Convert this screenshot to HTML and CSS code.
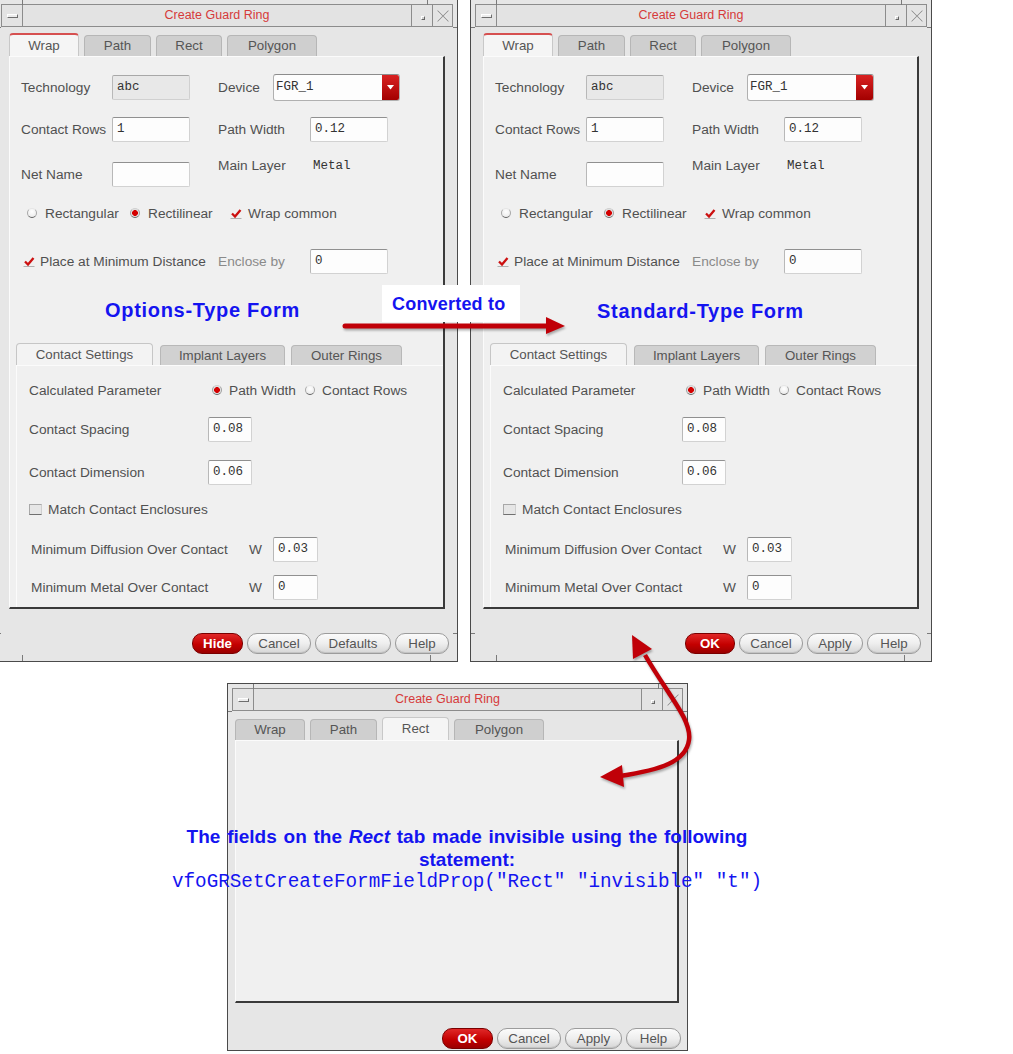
FILE: index.html
```html
<!DOCTYPE html>
<html>
<head>
<meta charset="utf-8">
<title>Create Guard Ring</title>
<link rel="stylesheet" href="styles.css">
</head>
<body>
<div class="canvas">

  <!-- Left window: options-type form -->
  <div class="win win-a">
    <span class="hdl hdl-t1"></span><span class="hdl hdl-t2"></span>
    <span class="hdl hdl-b1"></span><span class="hdl hdl-b2"></span>
    <span class="hdl hdl-l1"></span><span class="hdl hdl-l2"></span>
    <span class="hdl hdl-r1"></span><span class="hdl hdl-r2"></span>
    <div class="titlebar">
      <div class="tb-btn tb-min"><span class="min-glyph"></span></div>
      <div class="tb-title">Create Guard Ring</div>
      <div class="tb-btn tb-max"><span class="max-glyph"></span></div>
      <div class="tb-btn tb-close"><svg width="14" height="14" viewBox="0 0 14 14"><path d="M1.5 1.5 L12.5 12.5 M12.5 1.5 L1.5 12.5" stroke="#fff" stroke-width="2.4"/><path d="M1.5 1.5 L12.5 12.5 M12.5 1.5 L1.5 12.5" stroke="#9a9a9a" stroke-width="1.1"/></svg></div>
    </div>
    <div class="tabs">
      <div class="tab tab-sel tab-red t-wrap">Wrap</div>
      <div class="tab t-path">Path</div>
      <div class="tab t-rect">Rect</div>
      <div class="tab t-poly">Polygon</div>
    </div>
    <div class="panel">
      <div class="row r1">
        <span class="lbl c1">Technology</span>
        <span class="fld fld-dis">abc</span>
        <span class="lbl c2a">Device</span>
        <span class="combo"><span class="combo-text">FGR_1</span><span class="combo-btn"><svg width="7" height="5" viewBox="0 0 7 5"><path d="M0 0 H7 L3.5 4.5 Z" fill="#fff"/></svg></span></span>
      </div>
      <div class="row r2">
        <span class="lbl c1">Contact Rows</span>
        <span class="fld">1</span>
        <span class="lbl c2">Path Width</span>
        <span class="fld">0.12</span>
      </div>
      <div class="row r3">
        <span class="lbl c1">Net Name</span>
        <span class="fld"></span>
        <span class="lbl c2 hi">Main Layer</span>
        <span class="mono hi">Metal</span>
      </div>
      <div class="row r4">
        <span class="opt o1"><span class="radio"></span>Rectangular</span>
        <span class="opt o2"><span class="radio on"></span>Rectilinear</span>
        <span class="opt o3"><svg class="check" width="12" height="11" viewBox="0 0 12 11"><path d="M0.5 10.5 H11.5" stroke="#b0b0b0" stroke-width="1"/><path d="M2 5.5 L5 8.5 L10.5 2" stroke="#cc1010" stroke-width="2.3" fill="none"/></svg>Wrap common</span>
      </div>
      <div class="row r5">
        <span class="opt o4"><svg class="check" width="12" height="11" viewBox="0 0 12 11"><path d="M0.5 10.5 H11.5" stroke="#b0b0b0" stroke-width="1"/><path d="M2 5.5 L5 8.5 L10.5 2" stroke="#cc1010" stroke-width="2.3" fill="none"/></svg>Place at Minimum Distance</span>
        <span class="lbl c2e dis">Enclose by</span>
        <span class="fld">0</span>
      </div>
      <div class="subtabs">
        <div class="stab stab-sel s1">Contact Settings</div>
        <div class="stab s2">Implant Layers</div>
        <div class="stab s3">Outer Rings</div>
      </div>
      <div class="subpanel">
        <div class="row q1">
          <span class="lbl d1">Calculated Parameter</span>
          <span class="opt p1"><span class="radio on"></span>Path Width</span>
          <span class="opt p2"><span class="radio"></span>Contact Rows</span>
        </div>
        <div class="row q2">
          <span class="lbl d2">Contact Spacing</span>
          <span class="fld fld-s">0.08</span>
        </div>
        <div class="row q3">
          <span class="lbl d2">Contact Dimension</span>
          <span class="fld fld-s">0.06</span>
        </div>
        <div class="row q4">
          <span class="opt"><span class="box"></span>Match Contact Enclosures</span>
        </div>
        <div class="row q5">
          <span class="lbl d3">Minimum Diffusion Over Contact</span>
          <span class="lbl wl">W</span>
          <span class="fld fld-s">0.03</span>
        </div>
        <div class="row q6">
          <span class="lbl d3">Minimum Metal Over Contact</span>
          <span class="lbl wl">W</span>
          <span class="fld fld-s">0</span>
        </div>
      </div>
    </div>
    <div class="btnrow">
      <span class="btn btn-red bw51">Hide</span>
      <span class="btn bw64">Cancel</span>
      <span class="btn bw76">Defaults</span>
      <span class="btn bw54">Help</span>
    </div>
  </div>

  <!-- Right window: standard-type form -->
  <div class="win win-b">
    <span class="hdl hdl-t1"></span><span class="hdl hdl-t2"></span>
    <span class="hdl hdl-b1"></span><span class="hdl hdl-b2"></span>
    <span class="hdl hdl-l1"></span><span class="hdl hdl-l2"></span>
    <span class="hdl hdl-r1"></span><span class="hdl hdl-r2"></span>
    <div class="titlebar">
      <div class="tb-btn tb-min"><span class="min-glyph"></span></div>
      <div class="tb-title">Create Guard Ring</div>
      <div class="tb-btn tb-max"><span class="max-glyph"></span></div>
      <div class="tb-btn tb-close"><svg width="14" height="14" viewBox="0 0 14 14"><path d="M1.5 1.5 L12.5 12.5 M12.5 1.5 L1.5 12.5" stroke="#fff" stroke-width="2.4"/><path d="M1.5 1.5 L12.5 12.5 M12.5 1.5 L1.5 12.5" stroke="#9a9a9a" stroke-width="1.1"/></svg></div>
    </div>
    <div class="tabs">
      <div class="tab tab-sel tab-red t-wrap">Wrap</div>
      <div class="tab t-path">Path</div>
      <div class="tab t-rect">Rect</div>
      <div class="tab t-poly">Polygon</div>
    </div>
    <div class="panel">
      <div class="row r1">
        <span class="lbl c1">Technology</span>
        <span class="fld fld-dis">abc</span>
        <span class="lbl c2a">Device</span>
        <span class="combo"><span class="combo-text">FGR_1</span><span class="combo-btn"><svg width="7" height="5" viewBox="0 0 7 5"><path d="M0 0 H7 L3.5 4.5 Z" fill="#fff"/></svg></span></span>
      </div>
      <div class="row r2">
        <span class="lbl c1">Contact Rows</span>
        <span class="fld">1</span>
        <span class="lbl c2">Path Width</span>
        <span class="fld">0.12</span>
      </div>
      <div class="row r3">
        <span class="lbl c1">Net Name</span>
        <span class="fld"></span>
        <span class="lbl c2 hi">Main Layer</span>
        <span class="mono hi">Metal</span>
      </div>
      <div class="row r4">
        <span class="opt o1"><span class="radio"></span>Rectangular</span>
        <span class="opt o2"><span class="radio on"></span>Rectilinear</span>
        <span class="opt o3"><svg class="check" width="12" height="11" viewBox="0 0 12 11"><path d="M0.5 10.5 H11.5" stroke="#b0b0b0" stroke-width="1"/><path d="M2 5.5 L5 8.5 L10.5 2" stroke="#cc1010" stroke-width="2.3" fill="none"/></svg>Wrap common</span>
      </div>
      <div class="row r5">
        <span class="opt o4"><svg class="check" width="12" height="11" viewBox="0 0 12 11"><path d="M0.5 10.5 H11.5" stroke="#b0b0b0" stroke-width="1"/><path d="M2 5.5 L5 8.5 L10.5 2" stroke="#cc1010" stroke-width="2.3" fill="none"/></svg>Place at Minimum Distance</span>
        <span class="lbl c2e dis">Enclose by</span>
        <span class="fld">0</span>
      </div>
      <div class="subtabs">
        <div class="stab stab-sel s1">Contact Settings</div>
        <div class="stab s2">Implant Layers</div>
        <div class="stab s3">Outer Rings</div>
      </div>
      <div class="subpanel">
        <div class="row q1">
          <span class="lbl d1">Calculated Parameter</span>
          <span class="opt p1"><span class="radio on"></span>Path Width</span>
          <span class="opt p2"><span class="radio"></span>Contact Rows</span>
        </div>
        <div class="row q2">
          <span class="lbl d2">Contact Spacing</span>
          <span class="fld fld-s">0.08</span>
        </div>
        <div class="row q3">
          <span class="lbl d2">Contact Dimension</span>
          <span class="fld fld-s">0.06</span>
        </div>
        <div class="row q4">
          <span class="opt"><span class="box"></span>Match Contact Enclosures</span>
        </div>
        <div class="row q5">
          <span class="lbl d3">Minimum Diffusion Over Contact</span>
          <span class="lbl wl">W</span>
          <span class="fld fld-s">0.03</span>
        </div>
        <div class="row q6">
          <span class="lbl d3">Minimum Metal Over Contact</span>
          <span class="lbl wl">W</span>
          <span class="fld fld-s">0</span>
        </div>
      </div>
    </div>
    <div class="btnrow">
      <span class="btn btn-red bw50">OK</span>
      <span class="btn bw64">Cancel</span>
      <span class="btn bw56">Apply</span>
      <span class="btn bw54">Help</span>
    </div>
  </div>

  <!-- Bottom window: Rect tab with invisible fields -->
  <div class="win win-c">
    <span class="hdl hdl-t1"></span><span class="hdl hdl-t2"></span>
    <span class="hdl hdl-l1"></span><span class="hdl hdl-r1"></span>
    <div class="titlebar">
      <div class="tb-btn tb-min"><span class="min-glyph"></span></div>
      <div class="tb-title">Create Guard Ring</div>
      <div class="tb-btn tb-max"><span class="max-glyph"></span></div>
      <div class="tb-btn tb-close"><svg width="14" height="14" viewBox="0 0 14 14"><path d="M1.5 1.5 L12.5 12.5 M12.5 1.5 L1.5 12.5" stroke="#fff" stroke-width="2.4"/><path d="M1.5 1.5 L12.5 12.5 M12.5 1.5 L1.5 12.5" stroke="#9a9a9a" stroke-width="1.1"/></svg></div>
    </div>
    <div class="tabs">
      <div class="tab t-wrap">Wrap</div>
      <div class="tab t-path">Path</div>
      <div class="tab tab-sel t-rect2">Rect</div>
      <div class="tab t-poly">Polygon</div>
    </div>
    <div class="panel"></div>
    <div class="btnrow">
      <span class="btn btn-red bw51">OK</span>
      <span class="btn bw64">Cancel</span>
      <span class="btn bw57">Apply</span>
      <span class="btn bw55">Help</span>
    </div>
  </div>

  <!-- Annotations -->
  <div class="note note-opt">Options-Type Form</div>
  <div class="note note-std">Standard-Type Form</div>
  <div class="conv">Converted to</div>

  <svg class="arrows" width="1013" height="1054" viewBox="0 0 1013 1054">
    <path d="M345 326 L550 326" stroke="#c00008" stroke-width="5" stroke-linecap="round" fill="none"/>
    <path d="M546 317 L565 326 L546 334 Z" fill="#c00008"/>
    <path d="M645 655 C668 695 692 720 689 740 C686 762 660 770 620 776" stroke="#c00008" stroke-width="4.5" fill="none"/>
    <path d="M632 635 L633 659 L652 649 Z" fill="#c00008"/>
    <path d="M600 777 L622 765 L624 787 Z" fill="#c00008"/>
  </svg>

  <div class="caption">
    <div class="cap-line">The fields on the <i>Rect</i> tab made invisible using the following</div>
    <div class="cap-line">statement:</div>
    <div class="cap-code">vfoGRSetCreateFormFieldProp("Rect" "invisible" "t")</div>
  </div>

</div>
</body>
</html>
```

FILE: styles.css
```css
* { box-sizing: border-box; }
html, body { margin: 0; padding: 0; background: #ffffff; }
body {
  width: 1013px;
  height: 1054px;
  overflow: hidden;
  font-family: "Liberation Sans", Arial, sans-serif;
}
.canvas { position: relative; width: 1013px; height: 1054px; overflow: hidden; background: #fff; }

/* ---------- windows ---------- */
.win {
  position: absolute;
  display: flex;
  flex-direction: column;
  border: 1px solid #4a4a4a;
  background: #e6e6e6;
  padding: 4px 4px 3px 4px;
}
.win-a { left: -4px; top: -1px; width: 462px; height: 663px; }
.win-b { left: 470px; top: -1px; width: 462px; height: 663px; }
.win-c { left: 227px; top: 683px; width: 461px; height: 368px; }

/* frame resize handles */
.hdl { position: absolute; background: #7a7a7a; }
.hdl-t1 { left: 25px; top: 0; width: 1px; height: 5px; }
.hdl-t2 { left: 430px; top: 0; width: 1px; height: 5px; }
.hdl-b1 { left: 25px; bottom: 0; width: 1px; height: 6px; }
.hdl-b2 { left: 433px; bottom: 0; width: 1px; height: 6px; }
.hdl-l1 { left: 0; top: 27px; width: 4px; height: 1px; }
.hdl-l2 { left: 0; bottom: 27px; width: 4px; height: 1px; }
.hdl-r1 { right: 0; top: 27px; width: 4px; height: 1px; }
.hdl-r2 { right: 0; bottom: 27px; width: 4px; height: 1px; }

/* ---------- title bar ---------- */
.titlebar {
  display: flex;
  height: 23px;
  flex: none;
  border: 1px solid #8c8c8c;
  background: #e3e3e3;
}
.tb-btn { display: flex; align-items: center; justify-content: center; flex: none; }
.tb-min { width: 21px; border-right: 1px solid #8c8c8c; }
.tb-max { width: 21px; border-left: 1px solid #8c8c8c; }
.tb-close { width: 20px; border-left: 1px solid #8c8c8c; }
.min-glyph {
  width: 11px; height: 4px;
  background: #ececec;
  border: 1px solid; border-color: #fff #6e6e6e #6e6e6e #fff;
}
.max-glyph {
  width: 4px; height: 4px; margin: 4px 0 0 2px;
  background: #d0d0d0;
  border: 1px solid; border-color: #fff #666 #666 #fff;
}
.tb-title {
  flex: 1;
  text-align: center;
  font-size: 12.5px;
  line-height: 21px;
  color: #d63a3a;
}

/* ---------- tabs ---------- */
.tabs {
  display: flex;
  align-items: flex-end;
  gap: 5px;
  height: 23px;
  margin: 6px 0 0 8px;
  flex: none;
}
.win-c .tabs { margin-left: 3px; }
.tab {
  height: 21px;
  background: #cfcfcf;
  border: 1px solid #b6b6b6;
  border-bottom: none;
  border-radius: 4px 4px 0 0;
  font-size: 13.3px;
  line-height: 20px;
  color: #555;
  text-align: center;
}
.tab-sel { height: 23px; background: #f5f5f5; border-color: #c8c8c8; line-height: 22px; }
.tab-red { border-top: 2px solid #d65050; line-height: 21px; }
.t-wrap { width: 70px; }
.t-path { width: 67px; }
.t-rect { width: 66px; }
.t-rect2 { width: 67px; }
.t-poly { width: 90px; }

/* ---------- panel ---------- */
.panel {
  display: flex;
  flex-direction: column;
  height: 553px;
  flex: none;
  margin: 0 8px;
  background: #f0f0f0;
  border-top: 1px solid #fbfbfb;
  border-left: 1px solid #fbfbfb;
  border-right: 2px solid #3a3a3a;
  border-bottom: 2px solid #3a3a3a;
}
.win-c .panel { height: 263px; margin: 0 4px 0 3px; }

.row {
  display: flex;
  align-items: center;
  flex: none;
  padding-left: 11px;
  font-size: 13.7px;
  color: #505050;
}
.lbl { flex: none; white-space: nowrap; }
.dis { color: #8a8a8a; }
.hi { align-self: flex-start; line-height: 14px; margin-top: -1px; }

.r1 { height: 28px; margin-top: 16px; }
.r2 { height: 27px; margin-top: 15px; }
.r3 { height: 28px; margin-top: 17px; }
.r4 { height: 18px; margin-top: 16px; padding-left: 17px; }
.r5 { height: 27px; margin-top: 26px; padding-left: 13px; }

.c1 { width: 91px; }
.c2 { width: 92px; margin-left: 28px; }
.c2a { width: 55px; margin-left: 28px; }
.c2e { width: 92px; }

.fld {
  flex: none;
  width: 78px;
  height: 25px;
  padding-left: 4px;
  background: #fdfdfd;
  border: 1px solid #d2d2d2;
  border-top-color: #909090;
  border-left-color: #b8b8b8;
  border-radius: 2px;
  font-family: "Liberation Mono", "Courier New", monospace;
  font-size: 12.5px;
  line-height: 23px;
  color: #333;
}
.fld-dis { background: #e8e8e8; border-color: #a8a8a8 #d0d0d0 #d0d0d0 #b8b8b8; }
.fld-s { width: 44px; }
.q5 .fld-s, .q6 .fld-s { width: 45px; }

.mono {
  font-family: "Liberation Mono", "Courier New", monospace;
  font-size: 12.5px;
  color: #333;
  padding-left: 3px;
}

.combo {
  flex: none;
  display: flex;
  width: 127px;
  height: 27px;
  background: #fdfdfd;
  border: 1px solid #b0b0b0;
  border-top-color: #8c8c8c;
  border-radius: 3px;
}
.combo-text {
  flex: 1;
  padding-left: 2px;
  font-family: "Liberation Mono", "Courier New", monospace;
  font-size: 12.5px;
  line-height: 25px;
  color: #333;
}
.combo-btn {
  width: 17px;
  display: flex;
  align-items: center;
  justify-content: center;
  background: linear-gradient(#d92222, #a30000);
  border-radius: 0 2px 2px 0;
}

/* options */
.opt { display: flex; align-items: center; flex: none; white-space: nowrap; }
.o1 { width: 103px; }
.o2 { width: 100px; }
.o4 { width: 195px; }
.radio {
  flex: none;
  width: 10px; height: 10px;
  margin-right: 8px;
  border-radius: 50%;
  border: 1px solid;
  border-color: #e6e6e6 #a8a8a8 #5e5e5e #a8a8a8;
  background: radial-gradient(circle at 50% 35%, #ffffff, #e6e6e6);
}
.radio.on {
  border-color: #d0d0d0 #a0a0a0 #666 #a0a0a0;
  background: radial-gradient(circle at 50% 50%, #d40000 0 2.6px, #e2e2e2 3.2px);
}
.check { flex: none; margin-right: 6px; }
.o4 .check { margin-right: 5px; }
.box {
  flex: none;
  width: 13px; height: 11px;
  margin-right: 6px;
  background: #e6e6e6;
  border: 1px solid;
  border-color: #a8a8a8 #cfcfcf #707070 #a8a8a8;
}

/* sub tabs */
.subtabs {
  display: flex;
  align-items: flex-end;
  height: 22px;
  flex: none;
  margin: 68px 0 0 6px;
}
.stab {
  height: 20px;
  background: #d1d1d1;
  border: 1px solid #b8b8b8;
  border-bottom: none;
  border-radius: 4px 4px 0 0;
  font-size: 13.3px;
  line-height: 19px;
  color: #555;
  text-align: center;
}
.stab-sel { height: 22px; background: #f3f3f3; border-color: #c6c6c6; line-height: 21px; }
.s1 { width: 137px; }
.s2 { width: 125px; margin-left: 7px; }
.s3 { width: 111px; margin-left: 6px; }

.subpanel {
  flex: 1;
  display: flex;
  flex-direction: column;
  margin-left: 6px;
  background: #f0f0f0;
  border-top: 1px solid #fbfbfb;
  border-left: 1px solid #fbfbfb;
}
.q1 { height: 18px; margin-top: 15px; padding-left: 12px; }
.q2 { height: 26px; margin-top: 17px; padding-left: 12px; }
.q3 { height: 27px; margin-top: 17px; padding-left: 12px; }
.q4 { height: 18px; margin-top: 14px; padding-left: 12px; }
.q5 { height: 26px; margin-top: 18px; padding-left: 14px; }
.q6 { height: 27px; margin-top: 12px; padding-left: 14px; }
.d1 { width: 183px; }
.d2 { width: 179px; }
.d3 { width: 218px; }
.wl { width: 24px; }
.p1 { width: 93px; }
.p1 .radio, .p2 .radio { margin-right: 7px; }

/* ---------- buttons ---------- */
.btnrow {
  display: flex;
  justify-content: flex-end;
  gap: 4px;
  margin-top: 24px;
  padding-right: 4px;
  flex: none;
}
.win-b .btnrow { padding-right: 6px; }
.win-c .btnrow { margin-top: 25px; padding-right: 2px; }
.btn {
  height: 21px;
  border: 1px solid #9c9c9c;
  border-radius: 10px;
  background: linear-gradient(#fbfbfb 0%, #eeeeee 50%, #d6d6d6 100%);
  box-shadow: inset 0 -1px 0 #c4c4c4;
  font-size: 13.3px;
  line-height: 19px;
  color: #555;
  text-align: center;
}
.btn-red {
  background: linear-gradient(#e02828 0%, #c40000 55%, #9a0000 100%);
  border-color: #7a0000;
  box-shadow: none;
  color: #fff;
  font-weight: bold;
}
.bw50 { width: 50px; }
.bw51 { width: 51px; }
.bw54 { width: 54px; }
.bw55 { width: 55px; }
.bw56 { width: 56px; }
.bw57 { width: 57px; }
.bw64 { width: 64px; }
.bw76 { width: 76px; }

/* ---------- annotations ---------- */
.note {
  position: absolute;
  font-size: 20px;
  line-height: 20px;
  font-weight: bold;
  color: #1414f0;
  letter-spacing: 0.7px;
  white-space: nowrap;
}
.note-opt { left: 105px; top: 300px; }
.note-std { left: 597px; top: 301px; }
.conv {
  position: absolute;
  left: 382px;
  top: 285px;
  width: 138px;
  height: 37px;
  background: #fff;
  padding: 9px 0 0 10px;
  font-size: 18px;
  line-height: 20px;
  font-weight: bold;
  letter-spacing: 0.2px;
  color: #1414f0;
  white-space: nowrap;
}
.arrows {
  position: absolute;
  left: 0;
  top: 0;
  filter: drop-shadow(1px 2px 1px rgba(0, 0, 0, 0.3));
}
.caption {
  position: absolute;
  left: 150px;
  top: 825px;
  width: 634px;
  text-align: center;
  color: #1414f0;
}
.cap-line {
  font-size: 19px;
  line-height: 23px;
  font-weight: bold;
  word-spacing: 1.5px;
  white-space: nowrap;
}
.cap-code {
  font-family: "Liberation Mono", "Courier New", monospace;
  font-size: 19.3px;
  line-height: 22px;
  white-space: nowrap;
}
```
